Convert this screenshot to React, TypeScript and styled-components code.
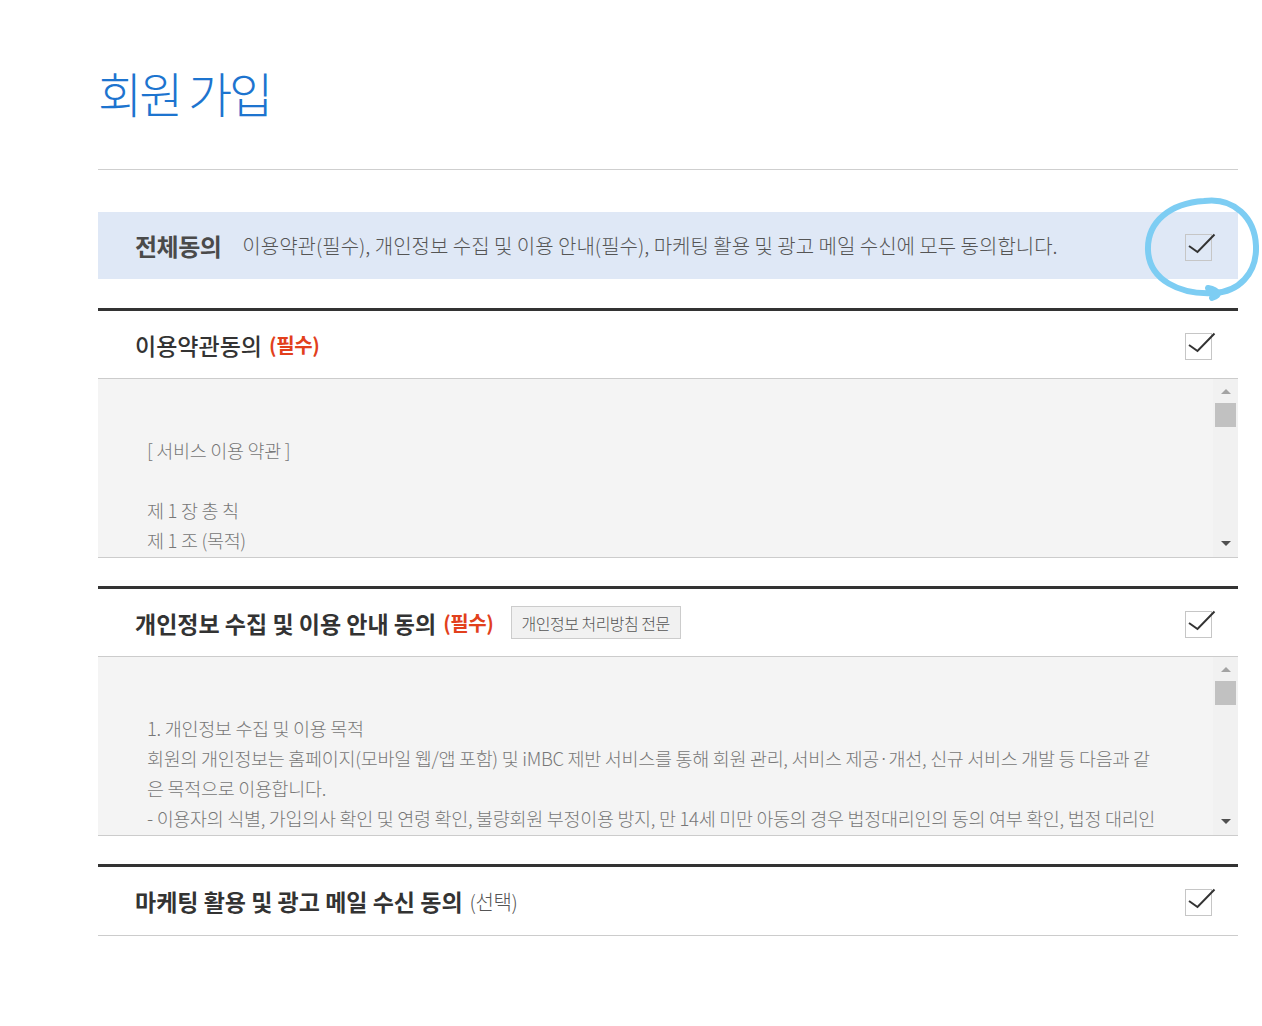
import React from "react";
import styled, { createGlobalStyle } from "styled-components";

const GlobalStyle = createGlobalStyle`
  html, body {
    margin: 0;
    padding: 0;
    background: #ffffff;
  }
  body {
    font-family: "Noto Sans CJK KR", "Noto Sans", sans-serif;
  }
`;

const Page = styled.main`
  width: 1140px;
  margin-left: 98px;
  padding-top: 60px;
  padding-bottom: 80px;
`;

const Title = styled.h1`
  margin: 0;
  font-size: 48px;
  line-height: 64px;
  font-weight: 300;
  letter-spacing: -3px;
  color: #1d74cf;
  padding-bottom: 45px;
  border-bottom: 1px solid #cfcfcf;
`;

const AllAgree = styled.div`
  position: relative;
  margin: 42px 0 29px;
  height: 67px;
  background: #dfe8f6;
  display: flex;
  align-items: center;
  padding: 0 21px 0 37px;
`;

const AllLabel = styled.strong`
  font-size: 24px;
  font-weight: 700;
  letter-spacing: -0.5px;
  color: #4a4a4a;
`;

const AllDesc = styled.span`
  margin-left: 21px;
  font-size: 20px;
  font-weight: 300;
  letter-spacing: 0;
  color: #555;
  flex: 1;
`;

const Marker = styled.svg`
  position: absolute;
  left: 1044px;
  top: -18px;
  pointer-events: none;
`;

const Section = styled.section`
  margin-top: 28px;
  border-top: 3px solid #333;
`;

const SectionHead = styled.div<{ $h?: number }>`
  height: ${(p) => p.$h ?? 67}px;
  display: flex;
  align-items: center;
  padding: 0 21px 0 37px;
  border-bottom: 1px solid #cccccc;
`;

const HeadTitle = styled.h2<{ $strong?: boolean }>`
  margin: 0;
  font-size: 23px;
  font-weight: ${(p) => (p.$strong ? 700 : 500)};
  letter-spacing: 0;
  color: #333;
`;

const Tag = styled.span<{ $required?: boolean }>`
  margin-left: 7px;
  font-size: 20px;
  letter-spacing: -0.4px;
  font-weight: ${(p) => (p.$required ? 700 : 300)};
  color: ${(p) => (p.$required ? "#e2401c" : "#555")};
`;

const PolicyButton = styled.button`
  margin-left: 17px;
  height: 33px;
  padding: 0 10px;
  border: 1px solid #cccccc;
  background: #f1f1f1;
  font-family: "Noto Sans CJK KR", sans-serif;
  font-size: 16px;
  font-weight: 300;
  letter-spacing: -0.5px;
  color: #555;
`;

const Spacer = styled.div`
  flex: 1;
`;

const Body = styled.div`
  height: 178px;
  display: flex;
  background: #f4f4f4;
  border-bottom: 1px solid #cccccc;
  overflow: hidden;
`;

const BodyText = styled.div`
  flex: 1;
  padding: 56px 0 0 49px;
  font-size: 18.5px;
  line-height: 30px;
  font-weight: 300;
  letter-spacing: -0.3px;
  color: #777;
  white-space: nowrap;
  overflow: hidden;
`;

const Line = styled.p`
  margin: 0;
  min-height: 30px;
`;

const ScrollBar = styled.div`
  width: 25px;
  background: #f1f1f1;
  display: flex;
  flex-direction: column;
  align-items: center;
  padding: 10px 0 11px;
  box-sizing: border-box;
`;

const Arrow = styled.div<{ $down?: boolean }>`
  width: 0;
  height: 0;
  border-left: 5px solid transparent;
  border-right: 5px solid transparent;
  ${(p) =>
    p.$down
      ? "border-top: 5px solid #505050;"
      : "border-bottom: 5px solid #a3a3a3;"}
`;

const Thumb = styled.div`
  width: 21px;
  height: 24px;
  margin-top: 9px;
  background: #c1c1c1;
`;

const Track = styled.div`
  flex: 1;
`;

const CheckBox = () => (
  <svg width="32" height="30" viewBox="0 0 32 30">
    <rect x="0.5" y="3.5" width="26" height="26" fill="none" stroke="#c6c6c6" />
    <polyline
      points="4,15 12.5,21 29.5,3.5"
      fill="none"
      stroke="#333"
      strokeWidth="2"
    />
  </svg>
);

const FakeScroll = () => (
  <ScrollBar>
    <Arrow />
    <Thumb />
    <Track />
    <Arrow $down />
  </ScrollBar>
);

export default function App() {
  return (
    <Page>
      <GlobalStyle />
      <Title>회원 가입</Title>

      <AllAgree>
        <AllLabel>전체동의</AllLabel>
        <AllDesc>
          이용약관(필수), 개인정보 수집 및 이용 안내(필수), 마케팅 활용 및 광고 메일
          수신에 모두 동의합니다.
        </AllDesc>
        <CheckBox />
        <Marker width="122" height="110" viewBox="0 0 122 110">
          <path
            d="M 62 7 C 92 3, 113 24, 114 52 C 115 80, 96 98, 72 99 C 38 101, 7 86, 6 56 C 5 28, 28 9, 62 7 Z M 66 94 C 76 96, 80 101, 70 104"
            fill="none"
            stroke="#7dcdf3"
            strokeWidth="6"
            strokeLinecap="round"
            strokeLinejoin="round"
          />
        </Marker>
      </AllAgree>

      <Section>
        <SectionHead>
          <HeadTitle>이용약관동의</HeadTitle>
          <Tag $required>(필수)</Tag>
          <Spacer />
          <CheckBox />
        </SectionHead>
        <Body>
          <BodyText>
            <Line>[ 서비스 이용 약관 ]</Line>
            <Line />
            <Line>제 1 장 총 칙</Line>
            <Line>제 1 조 (목적)</Line>
          </BodyText>
          <FakeScroll />
        </Body>
      </Section>

      <Section>
        <SectionHead>
          <HeadTitle $strong>개인정보 수집 및 이용 안내 동의</HeadTitle>
          <Tag $required>(필수)</Tag>
          <PolicyButton>개인정보 처리방침 전문</PolicyButton>
          <Spacer />
          <CheckBox />
        </SectionHead>
        <Body>
          <BodyText>
            <Line>1. 개인정보 수집 및 이용 목적</Line>
            <Line>
              회원의 개인정보는 홈페이지(모바일 웹/앱 포함) 및 iMBC 제반 서비스를 통해
              회원 관리, 서비스 제공·개선, 신규 서비스 개발 등 다음과 같
            </Line>
            <Line>은 목적으로 이용합니다.</Line>
            <Line>
              - 이용자의 식별, 가입의사 확인 및 연령 확인, 불량회원 부정이용 방지, 만
              14세 미만 아동의 경우 법정대리인의 동의 여부 확인, 법정 대리인
            </Line>
          </BodyText>
          <FakeScroll />
        </Body>
      </Section>

      <Section>
        <SectionHead $h={68}>
          <HeadTitle $strong>마케팅 활용 및 광고 메일 수신 동의</HeadTitle>
          <Tag>(선택)</Tag>
          <Spacer />
          <CheckBox />
        </SectionHead>
      </Section>
    </Page>
  );
}
